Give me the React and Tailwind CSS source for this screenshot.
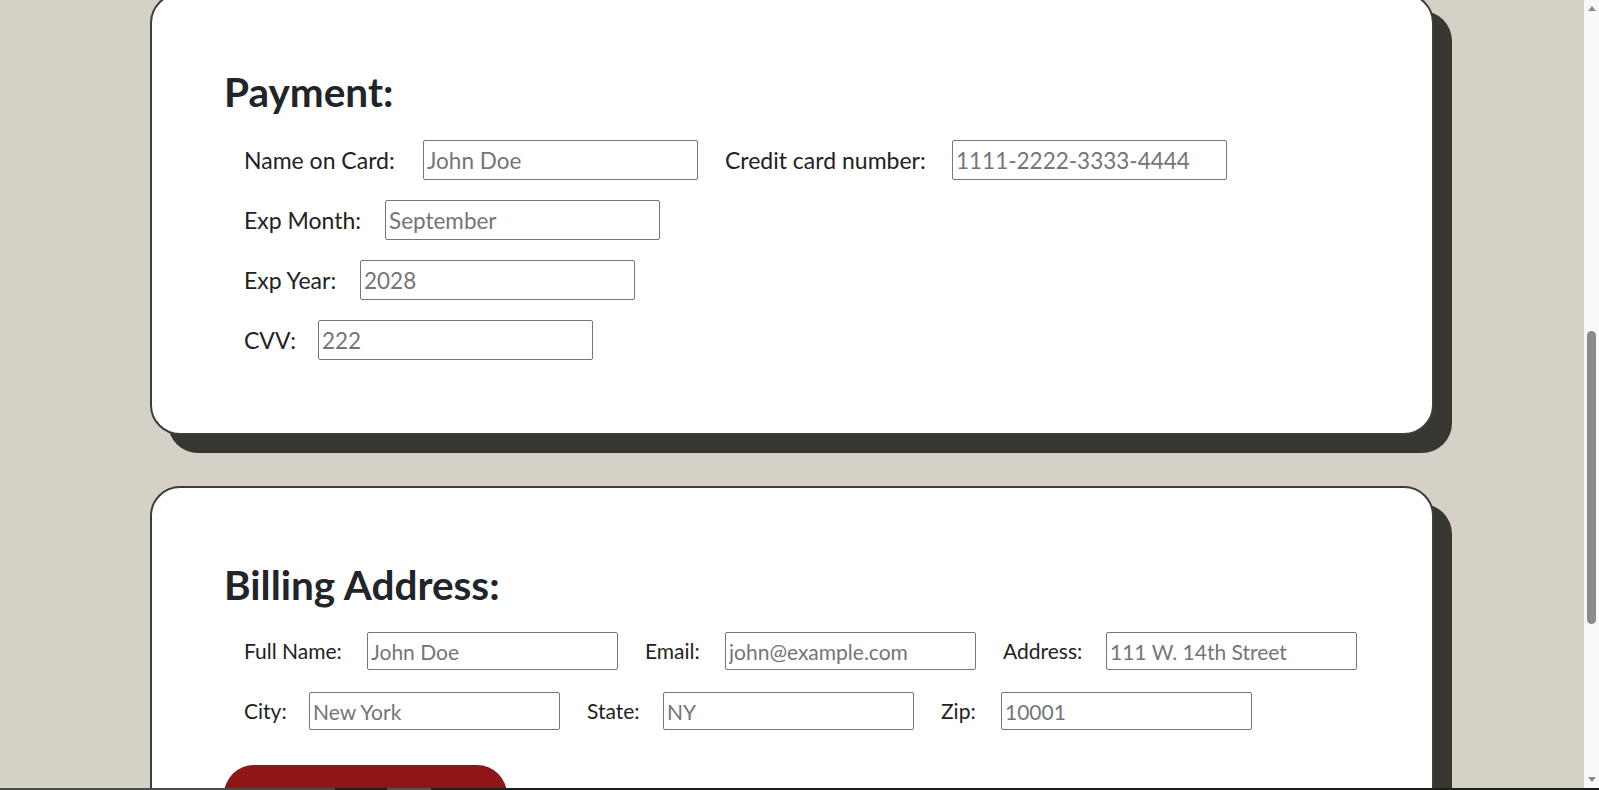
import React from "react";

const paymentRows = [
  [
    { label: "Name on Card:", w: "w-[179px]", placeholder: "John Doe" },
    { label: "Credit card number:", w: "w-[227px]", placeholder: "1111-2222-3333-4444" },
  ],
  [{ label: "Exp Month:", w: "w-[141px]", placeholder: "September" }],
  [{ label: "Exp Year:", w: "w-[116px]", placeholder: "2028" }],
  [{ label: "CVV:", w: "w-[74px]", placeholder: "222" }],
];

const billingRows = [
  [
    { label: "Full Name:", w: "w-[123px]", placeholder: "John Doe" },
    { label: "Email:", w: "w-[80px]", placeholder: "john@example.com" },
    { label: "Address:", w: "w-[103px]", placeholder: "111 W. 14th Street" },
  ],
  [
    { label: "City:", w: "w-[65px]", placeholder: "New York" },
    { label: "State:", w: "w-[76px]", placeholder: "NY" },
    { label: "Zip:", w: "w-[60px]", placeholder: "10001" },
  ],
];

function Field({ label, w, placeholder, big }) {
  return (
    <div className="flex items-center">
      <label className={`${w} shrink-0 whitespace-nowrap`}>{label}</label>
      <input
        type="text"
        placeholder={placeholder}
        className={
          big
            ? "h-[40px] w-[275px] rounded-[2px] border border-[#767676] bg-white px-[3px] text-[22.5px] text-[#222] placeholder:text-[#757575] outline-none"
            : "h-[38px] w-[251px] rounded-[2px] border border-[#767676] bg-white px-[3px] text-[21px] text-[#222] placeholder:text-[#757575] outline-none"
        }
      />
    </div>
  );
}

function Card({ title, children, first }) {
  return (
    <section
      className={`mx-auto w-[1284px] rounded-[30px] border-2 border-[#3d3d3d] bg-white pl-[92px] pr-[72px] pt-[73px] pb-[73px] shadow-[18px_18px_0_#383631] ${
        first ? "-mt-[7px]" : "mt-[51px]"
      }`}
    >
      <h1 className="-ml-[20px] h-[48px] text-[40.5px] font-bold leading-[48px] text-[#212529]">
        {title}
      </h1>
      {children}
    </section>
  );
}

function Scrollbar() {
  return (
    <div className="flex w-[15px] shrink-0 flex-col bg-[#f9f9f9]">
      <div className="flex h-[17px] items-center justify-center">
        <svg width="8" height="5" viewBox="0 0 8 5">
          <path d="M0 5 L4 0 L8 5 Z" fill="#8a8a8a" />
        </svg>
      </div>
      <div className="h-[314px]" />
      <div className="mx-auto h-[293px] w-[9px] rounded-full bg-[#8b8b8b]" />
      <div className="flex-1" />
      <div className="flex h-[17px] items-center justify-center">
        <svg width="8" height="5" viewBox="0 0 8 5">
          <path d="M0 0 L8 0 L4 5 Z" fill="#8a8a8a" />
        </svg>
      </div>
    </div>
  );
}

export default function App() {
  return (
    <div className="flex h-[790px] flex-col overflow-hidden bg-[#d5d1c7] font-['Lato','Noto_Sans',sans-serif] text-[#222]">
      <div className="flex min-h-0 flex-1">
        <main className="min-w-0 flex-1 overflow-hidden">
          {/* Payment */}
          <Card title="Payment:" first>
            <div className="mt-[24px] flex flex-col gap-[20px] text-[23px]">
              {paymentRows.map((row, i) => (
                <div key={i} className="flex h-[40px] items-center gap-[27px]">
                  {row.map((f) => (
                    <Field key={f.label} {...f} big />
                  ))}
                </div>
              ))}
            </div>
          </Card>

          {/* Billing */}
          <Card title="Billing Address:">
            <div className="mt-[23px] flex flex-col gap-[22px] text-[21px]">
              {billingRows.map((row, i) => (
                <div key={i} className="flex h-[38px] items-center gap-[27px]">
                  {row.map((f) => (
                    <Field key={f.label} {...f} />
                  ))}
                </div>
              ))}
            </div>
            <button
              aria-label="Continue to checkout"
              className="-ml-[20px] mt-[35px] h-[60px] w-[283px] rounded-[30px] bg-[#8e1616]"
            />
          </Card>
        </main>
        <Scrollbar />
      </div>
      <div className="flex h-[2px] shrink-0">
        <div className="w-[335px] bg-[#4a4a4a]" />
        <div className="w-[52px] bg-[#1e1e1e]" />
        <div className="w-[44px] bg-[#555]" />
        <div className="flex-1 bg-[#1e1e1e]" />
      </div>
    </div>
  );
}
